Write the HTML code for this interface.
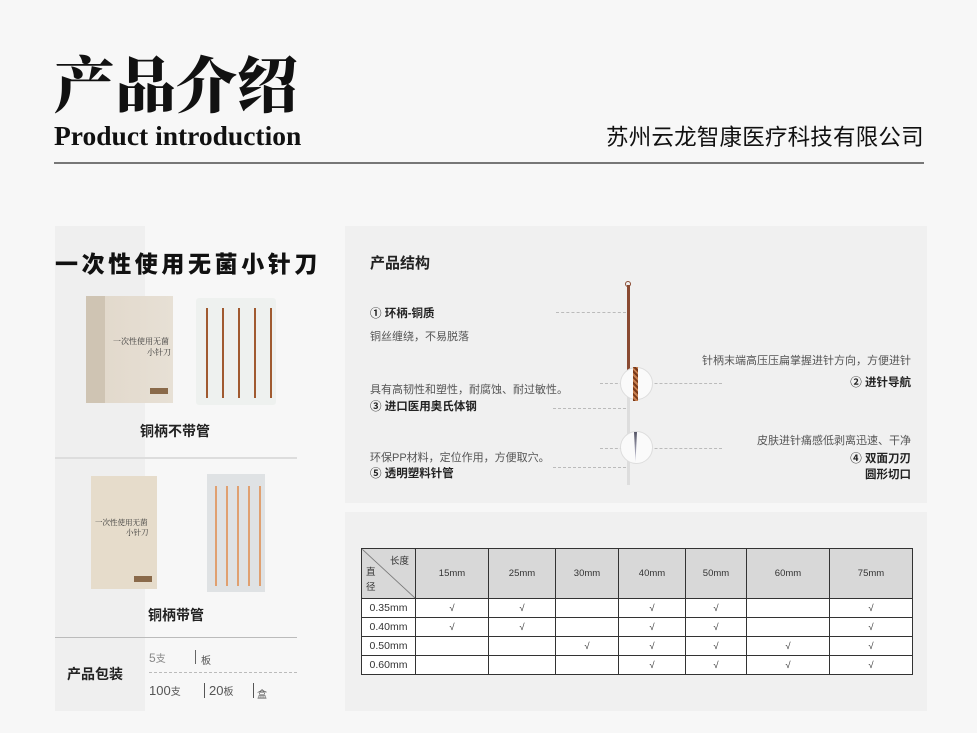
<!DOCTYPE html>
<html><head><meta charset="utf-8"><style>
*{margin:0;padding:0;box-sizing:border-box}
body{width:977px;height:733px;background:#f7f7f7;position:relative;overflow:hidden;font-family:"Liberation Sans","Noto Sans CJK SC",sans-serif;color:#222}
.a{position:absolute;white-space:nowrap}
.s{font-size:11px;color:#555}
.b{font-size:11.5px;font-weight:bold;color:#222}
.dl{position:absolute;border-top:1px dashed #bbb;height:0}
table{border-collapse:collapse;position:absolute;left:361px;top:548px;width:552px;font-size:9.5px;color:#333}
td{border:1px solid #333;text-align:center;height:19px;background:#fff}
tr.h td{background:#d8d8d8;height:50px}
</style></head><body>
<div class="a" style="left:54px;top:44px;font-family:'Noto Serif CJK SC',serif;font-weight:900;font-size:61px;line-height:76px;color:#111">产品介绍</div>
<div class="a" style="left:54px;top:120px;font-family:'Liberation Serif',serif;font-weight:bold;font-size:27.5px;color:#111">Product introduction</div>
<div class="a" style="left:606px;top:120px;font-size:22.5px;color:#111;letter-spacing:0.2px">苏州云龙智康医疗科技有限公司</div>
<div class="a" style="left:54px;top:162px;width:870px;height:2px;background:#777"></div>

<div class="a" style="left:55px;top:226px;width:90px;height:485px;background:#efefef"></div>
<div class="a" style="left:55px;top:245px;font-size:23px;font-weight:900;letter-spacing:3.6px;color:#111">一次性使用无菌小针刀</div>
<div class="a" style="left:86px;top:296px;width:87px;height:107px;background:linear-gradient(90deg,#cfc4b3 0,#cfc4b3 22%,#e2d9cc 22%,#e7e0d5 100%)"></div>
<div class="a" style="left:113px;top:336px;font-size:8px;color:#333;font-family:'Noto Serif CJK SC',serif">一次性使用无菌</div>
<div class="a" style="left:147px;top:347px;font-size:8px;color:#333;font-family:'Noto Serif CJK SC',serif">小针刀</div>
<div class="a" style="left:150px;top:388px;width:18px;height:6px;background:#8a6a4a"></div>
<div class="a" style="left:196px;top:298px;width:80px;height:107px;background:#eef1ef;border-radius:3px"></div>
<div class="a" style="left:203px;top:308px;width:70px;height:90px;background:repeating-linear-gradient(90deg,transparent 0,transparent 3px,#a05a30 3px,#a05a30 5px,transparent 5px,transparent 16px);-webkit-mask:linear-gradient(#000 50%,#999 50%)"></div>
<div class="a" style="left:140px;top:421px;font-size:14px;font-weight:bold;color:#222">铜柄不带管</div>
<div class="a" style="left:55px;top:457px;width:242px;height:2px;background:#ddd"></div>
<div class="a" style="left:91px;top:476px;width:66px;height:113px;background:#e6dccb"></div>
<div class="a" style="left:95px;top:517px;font-size:7.5px;color:#333;font-family:'Noto Serif CJK SC',serif">一次性使用无菌</div>
<div class="a" style="left:126px;top:527px;font-size:7.5px;color:#333;font-family:'Noto Serif CJK SC',serif">小针刀</div>
<div class="a" style="left:134px;top:576px;width:18px;height:6px;background:#8a6a4a"></div>
<div class="a" style="left:207px;top:474px;width:58px;height:118px;background:#dfe2e4"></div>
<div class="a" style="left:211px;top:486px;width:54px;height:100px;background:repeating-linear-gradient(90deg,transparent 0,transparent 4px,#e0a070 4px,#e0a070 6px,transparent 6px,transparent 11px)"></div>
<div class="a" style="left:148px;top:605px;font-size:14px;font-weight:bold;color:#222">铜柄带管</div>
<div class="a" style="left:55px;top:637px;width:242px;height:1px;background:#bbb"></div>
<div class="a" style="left:67px;top:664px;font-size:14px;font-weight:bold;color:#222">产品包装</div>
<div class="a" style="left:149px;top:650px;font-size:12px;color:#888">5<span style="font-size:10px">支</span></div>
<div class="a" style="left:195px;top:650px;width:1px;height:14px;background:#666"></div>
<div class="a" style="left:201px;top:652px;font-size:10px;color:#555">板</div>
<div class="dl" style="left:149px;top:672px;width:148px"></div>
<div class="a" style="left:149px;top:683px;font-size:13px;color:#555">100<span style="font-size:10px">支</span></div>
<div class="a" style="left:204px;top:683px;width:1px;height:15px;background:#555"></div>
<div class="a" style="left:209px;top:683px;font-size:13px;color:#555">20<span style="font-size:10px">板</span></div>
<div class="a" style="left:253px;top:683px;width:1px;height:15px;background:#555"></div>
<div class="a" style="left:257px;top:686px;font-size:10px;color:#555">盒</div>

<div class="a" style="left:345px;top:226px;width:582px;height:277px;background:#f0f0f0"></div>
<div class="a" style="left:370px;top:252px;font-size:15px;font-weight:bold;color:#222">产品结构</div>
<div class="a" style="left:627px;top:285px;width:3px;height:200px;background:linear-gradient(#8a4a32 0,#8a4a32 55%,#ddd 55%)"></div>
<div class="a" style="left:625px;top:281px;width:6px;height:6px;border:1px solid #8a4a32;border-radius:50%"></div>
<div class="dl" style="left:556px;top:312px;width:70px"></div>
<div class="dl" style="left:553px;top:408px;width:73px"></div>
<div class="dl" style="left:553px;top:467px;width:73px"></div>
<div class="dl" style="left:600px;top:383px;width:122px"></div>
<div class="dl" style="left:600px;top:448px;width:122px"></div>
<div class="a" style="left:620px;top:367px;width:33px;height:33px;border-radius:50%;background:#fafafa;border:1px solid #ddd"></div>
<div class="a" style="left:633px;top:367px;width:5px;height:34px;background:repeating-linear-gradient(45deg,#7a3a1a 0,#7a3a1a 2px,#c88050 2px,#c88050 4px)"></div>
<div class="a" style="left:620px;top:431px;width:33px;height:33px;border-radius:50%;background:#fafafa;border:1px solid #ddd"></div>
<div class="a" style="left:634px;top:432px;width:3px;height:30px;background:linear-gradient(#556,#ccd);clip-path:polygon(0 0,100% 0,50% 100%)"></div>
<div class="a b" style="left:370px;top:305px">① 环柄-铜质</div>
<div class="a s" style="left:370px;top:328px">铜丝缠绕，不易脱落</div>
<div class="a s" style="left:370px;top:381px">具有高韧性和塑性，耐腐蚀、耐过敏性。</div>
<div class="a b" style="left:370px;top:398px">③ 进口医用奥氏体钢</div>
<div class="a s" style="left:370px;top:449px">环保PP材料，定位作用，方便取穴。</div>
<div class="a b" style="left:370px;top:465px">⑤ 透明塑料针管</div>
<div class="a s" style="right:66px;top:352px">针柄末端高压压扁掌握进针方向，方便进针</div>
<div class="a b" style="right:66px;top:374px">② 进针导航</div>
<div class="a s" style="right:66px;top:432px">皮肤进针痛感低剥离迅速、干净</div>
<div class="a b" style="right:66px;top:450px;text-align:right">④ 双面刀刃<br>圆形切口</div>

<div class="a" style="left:345px;top:512px;width:582px;height:199px;background:#f0f0f0"></div>
<table>
<tr class="h"><td style="width:54px;position:relative;background:#d8d8d8 linear-gradient(to top right,transparent 49%,#666 50%,transparent 51%)"><span style="position:absolute;right:6px;top:4px">长度</span><span style="position:absolute;left:4px;top:16px;line-height:15px">直<br>径</span></td><td style="width:73px">15mm</td><td style="width:67px">25mm</td><td style="width:63px">30mm</td><td style="width:67px">40mm</td><td style="width:61px">50mm</td><td style="width:83px">60mm</td><td>75mm</td></tr>
<tr><td style="font-size:10.5px">0.35mm</td><td>√</td><td>√</td><td></td><td>√</td><td>√</td><td></td><td>√</td></tr>
<tr><td style="font-size:10.5px">0.40mm</td><td>√</td><td>√</td><td></td><td>√</td><td>√</td><td></td><td>√</td></tr>
<tr><td style="font-size:10.5px">0.50mm</td><td></td><td></td><td>√</td><td>√</td><td>√</td><td>√</td><td>√</td></tr>
<tr><td style="font-size:10.5px">0.60mm</td><td></td><td></td><td></td><td>√</td><td>√</td><td>√</td><td>√</td></tr>
</table>
</body></html>
